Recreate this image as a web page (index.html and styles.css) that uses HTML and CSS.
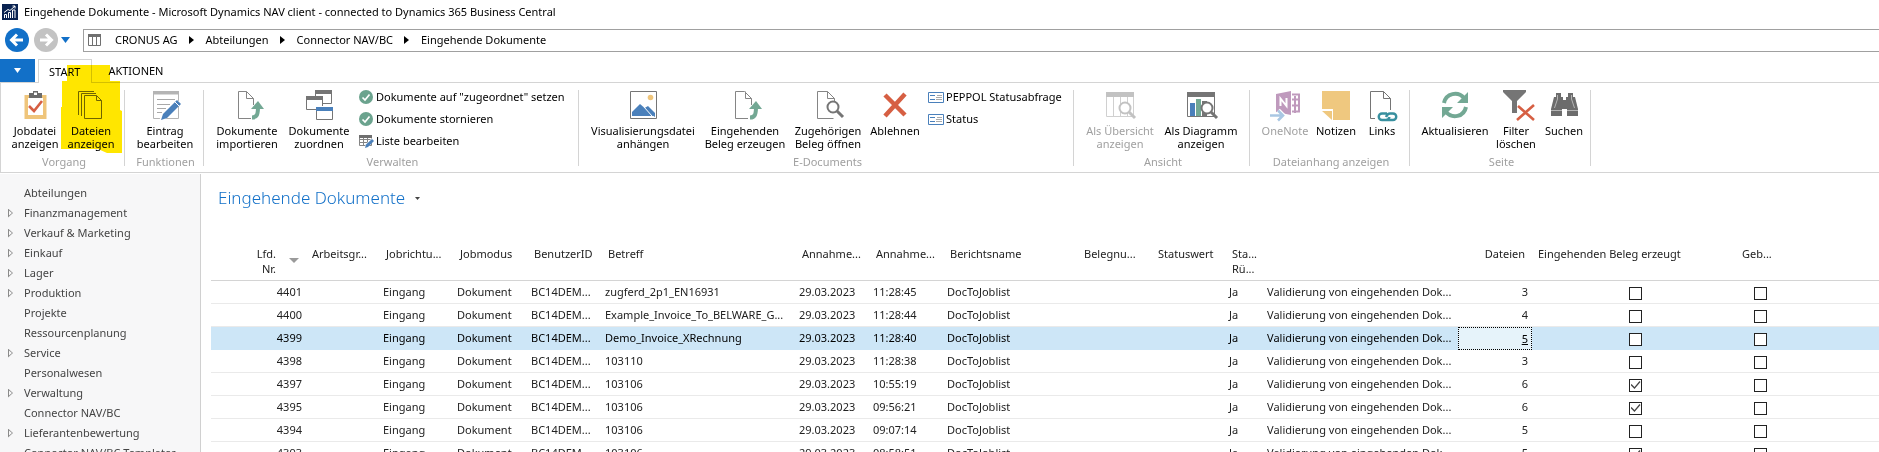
FILE: index.html
```
<!DOCTYPE html>
<html lang="de">
<head>
<meta charset="utf-8">
<title>Eingehende Dokumente - Microsoft Dynamics NAV client</title>
<link rel="stylesheet" href="styles.css">
</head>
<body>
<div class="app">
<header class="titlebar">
  <svg class="app-logo" viewBox="0 0 16 16"><rect width="16" height="16" fill="#0a2351"/><path d="M2.500 14v-3.500h2V14M6.500 14V8.500h2V14M10.500 14V6h2.500v8M2 8.500l4-3 2 1L13 2M10.500 2H13v2.500" fill="none" stroke="#fff"/></svg>
  <span>Eingehende Dokumente - Microsoft Dynamics NAV client - connected to Dynamics 365 Business Central</span>
</header>
<div class="navbar">
  <button class="round back" aria-label="Zurück"><svg viewBox="0 0 24 24"><path d="M18 12H7M12 6.500L6.500 12l5.500 5.500"/></svg></button>
  <button class="round forward" aria-label="Vorwärts"><svg viewBox="0 0 24 24"><path d="M6 12h11M12 6.500l5.500 5.500-5.500 5.500"/></svg></button>
  <button class="history" aria-label="Verlauf"><svg viewBox="0 0 9 6"><path d="M0 0h9L4.500 6z" fill="#1270c8"/></svg></button>
  <nav class="address">
    <svg class="page-icon" viewBox="0 0 13 12"><path d="M.5.500h12v11H.5zM4.500 3v8.500M8.500 3v8.500" fill="none" stroke="#707070"/><path d="M0 0h13v3H0z" fill="#707070"/></svg>
    <a href="#">CRONUS AG</a><i class="crumb"></i><a href="#">Abteilungen</a><i class="crumb"></i><a href="#">Connector NAV/BC</a><i class="crumb"></i><a href="#">Eingehende Dokumente</a>
  </nav>
</div>
<div class="tabs">
  <button class="file-tab" aria-label="Datei"><svg viewBox="0 0 7 5"><path d="M0 0h7L3.500 5z" fill="#fff"/></svg></button>
  <button class="tab active">START</button>
  <button class="tab">AKTIONEN</button>
</div>
<div class="ribbon">
  <section class="group g-vorgang">
    <div class="tools">
      <button class="tool w56"><svg viewBox="0 0 30 30"><path d="M4.500 5h22v24h-22z" fill="#efc57b"/><path d="M8 8h15v17H8z" fill="#fff"/><path d="M9 3h4V1h5v2h4v5H9z" fill="#6b6b6b"/><path d="M14 2.500h3V5h-3z" fill="#fff"/><path d="M9 16l5 5 8-10" fill="none" stroke="#d65f43" stroke-width="2.600"/></svg><span>Jobdatei<br>anzeigen</span></button>
      <button class="tool w56"><svg viewBox="0 0 30 30" fill="none" stroke="#6f6f6f"><path d="M2.500 25V1.500H18M5.500 26V3.500H20M8.500 5.500h12l5 5v18h-17zM20.500 5.500v5h5"/></svg><span>Dateien<br>anzeigen</span></button>
    </div>
    <h2>Vorgang</h2>
  </section>
  <section class="group g-funktionen">
    <div class="tools">
      <button class="tool w64"><svg viewBox="0 0 30 30"><path d="M3.500 1.500h25v27h-25z" fill="none" stroke="#b4b4b4"/><path d="M3 1h26v3.500H3z" fill="#b4b4b4"/><path d="M7 9.500h18M7 14.500h13M7 18.500h9M7 22.500h5" stroke="#a8a8a8"/><path d="M9 31l3-8L26 9l5 4-14 15z" fill="#fff"/><path d="M11 30l2-6L27 10l4 4-14 14z" fill="#4a80bb"/><path d="M25 12l4 4" stroke="#fff"/></svg><span>Eintrag<br>bearbeiten</span></button>
    </div>
    <h2>Funktionen</h2>
  </section>
  <section class="group g-verwalten">
    <div class="tools">
      <button class="tool w72"><svg viewBox="0 0 30 30"><path d="M21.500 15V8.500l-7-7h-8v27H19M14.500 1.500v7h7" fill="none" stroke="#858585"/><path d="M20 27.500c5 0 6-3 6-11" fill="none" stroke="#73a894" stroke-width="4"/><path d="M19 19l7-8 6 8z" fill="#73a894"/></svg><span>Dokumente<br>importieren</span></button>
      <button class="tool w72"><svg viewBox="0 0 30 30"><path d="M11.500 6V1.500h16v12H19M2.500 7.500h16v12h-16z" fill="none" stroke="#757575"/><path d="M11 0h17v4H11zM2 6h17v4H2z" fill="#757575"/><path d="M12 16h17v15H12z" fill="#fff"/><path d="M12.500 17.500h16v12h-16z" fill="#fff" stroke="#757575"/><path d="M12 17h17v4H12z" fill="#4a80bb"/></svg><span>Dokumente<br>zuordnen</span></button>
      <div class="list">
        <button class="item"><svg viewBox="0 0 16 16"><circle cx="8" cy="8" r="7" fill="#6ba38e"/><path d="M4.500 8.500L7 11l4.500-5.500" fill="none" stroke="#fff" stroke-width="1.700"/></svg>Dokumente auf "zugeordnet" setzen</button>
        <button class="item"><svg viewBox="0 0 16 16"><circle cx="8" cy="8" r="7" fill="#6ba38e"/><path d="M4.500 8.500L7 11l4.500-5.500" fill="none" stroke="#fff" stroke-width="1.700"/></svg>Dokumente stornieren</button>
        <button class="item"><svg viewBox="0 0 16 16"><path d="M1.500 2.500h12v10h-12zM1 6.500h13M1 9.500h13M5.500 3v10M9.500 3v10" fill="none" stroke="#858585"/><path d="M1 2h13v3H1z" fill="#6f6f6f"/><path d="M6 16l2-5 6-6 2 2-6 7z" fill="#fff"/><path d="M7 15l1-3.500L14 6l2 2-6 6z" fill="#4a80bb"/></svg>Liste bearbeiten</button>
      </div>
    </div>
    <h2>Verwalten</h2>
  </section>
  <section class="group g-edocs">
    <div class="tools">
      <button class="tool w112"><svg viewBox="0 0 30 30"><path d="M2.500 1.500h26v27h-26z" fill="#fff" stroke="#757575"/><circle cx="22.500" cy="7.500" r="2.800" fill="#efc57b"/><path d="M4 26v-4l8-8 14 12z" fill="#4a80bb"/><path d="M15 19l5-3 7 7v4z" fill="#4a80bb"/><path d="M16 17l8 9" stroke="#fff"/></svg><span>Visualisierungsdatei<br>anhängen</span></button>
      <button class="tool w92"><svg viewBox="0 0 30 30"><path d="M21.500 15V8.500l-7-7h-9v27H18M15.500 1.500v7h6" fill="none" stroke="#858585"/><path d="M20 27.500c5 0 6-3 6-11" fill="none" stroke="#73a894" stroke-width="4"/><path d="M19 19l7-8 6 8z" fill="#73a894"/></svg><span>Eingehenden<br>Beleg erzeugen</span></button>
      <button class="tool w74"><svg viewBox="0 0 30 30"><path d="M21.500 11V8.500l-7-7h-10v27h16M14.500 1.500v7h7" fill="none" stroke="#858585"/><circle cx="20" cy="17" r="5.500" fill="#fff" stroke="#757575" stroke-width="2"/><path d="M24 21l6 6" stroke="#757575" stroke-width="3"/></svg><span>Zugehörigen<br>Beleg öffnen</span></button>
      <button class="tool w60"><svg viewBox="0 0 30 30"><path d="M5 5l20 20M25 4L5 26" stroke="#d65f43" stroke-width="4.500"/></svg><span>Ablehnen</span></button>
      <div class="list">
        <button class="item"><svg viewBox="0 0 16 16"><path d="M.5 3.500h15v10H.5z" fill="#fff" stroke="#4a80bb"/><path d="M2 6.500h5M2 10.500h5" stroke="#4a80bb"/><path d="M8 8.500h6M9 6.500h5M8 10.500h6" stroke="#aaa"/></svg>PEPPOL Statusabfrage</button>
        <button class="item"><svg viewBox="0 0 16 16"><path d="M.5 3.500h15v10H.5z" fill="#fff" stroke="#4a80bb"/><path d="M2 6.500h5M2 10.500h5" stroke="#4a80bb"/><path d="M8 8.500h6M9 6.500h5M8 10.500h6" stroke="#aaa"/></svg>Status</button>
      </div>
    </div>
    <h2>E-Documents</h2>
  </section>
  <section class="group g-ansicht">
    <div class="tools">
      <button class="tool w78" disabled><svg viewBox="0 0 30 30"><path d="M1.500 2.500h27v24h-27zM8.500 6v20M15.500 6v20M22.500 6v20" fill="none" stroke="#d0d0d0"/><path d="M1 2h28v5H1z" fill="#c2c2c2"/><circle cx="20" cy="18" r="5.500" fill="#fff" stroke="#c2c2c2" stroke-width="2"/><path d="M24 22l6 6" stroke="#c2c2c2" stroke-width="3"/></svg><span>Als Übersicht<br>anzeigen</span></button>
      <button class="tool w84"><svg viewBox="0 0 30 30"><path d="M1.500 2.500h27v24h-27z" fill="#fff" stroke="#757575"/><path d="M1 2h28v5H1z" fill="#757575"/><path d="M4 13h5v13H4z" fill="#4a80bb"/><path d="M10 9h5v17h-5z" fill="#73a894"/><path d="M16 11h5v15h-5z" fill="#757575"/><circle cx="21" cy="18" r="5.500" fill="#fff" stroke="#757575" stroke-width="2"/><path d="M25 22l6 6" stroke="#757575" stroke-width="3"/></svg><span>Als Diagramm<br>anzeigen</span></button>
    </div>
    <h2>Ansicht</h2>
  </section>
  <section class="group g-anhang">
    <div class="tools">
      <button class="tool w54" disabled><svg viewBox="0 0 30 30"><path d="M6 4l15-3v24L6 22z" fill="#bf9abd"/><path d="M10.500 16V8.500l6 7.500V8" fill="none" stroke="#fff" stroke-width="2"/><path d="M22 4.500h7v17h-7M22 9.500h7M22 15.500h7M25 6v17" fill="none" stroke="#bf9abd" stroke-width="2"/><path d="M0 25.500h12M8 20.500l5 5-5 5" fill="none" stroke="#fff" stroke-width="5"/><path d="M0 25.500h12M8 20.500l5 5-5 5" fill="none" stroke="#a9c7e3" stroke-width="2.600"/></svg><span>OneNote</span></button>
      <button class="tool w48"><svg viewBox="0 0 30 30"><path d="M1 1h28v29H12V19H1z" fill="#efc87f"/><path d="M1 21h10v9z" fill="#efc87f"/></svg><span>Notizen</span></button>
      <button class="tool w44"><svg viewBox="0 0 30 30"><path d="M23.500 20V8.500l-7-7h-13v27H8M16.500 1.500v7h7" fill="none" stroke="#757575"/><path d="M10 21h20v10H10z" fill="#fff"/><path d="M20 23.500h-5a3 3 0 0 0 0 6.500h4c2 0 3-1 3.500-3M19.500 30H26a3 3 0 0 0 0-6.500h-3c-2 0-3 1-4 3.500" fill="none" stroke="#38909f" stroke-width="2.400"/></svg><span>Links</span></button>
    </div>
    <h2>Dateianhang anzeigen</h2>
  </section>
  <section class="group g-seite">
    <div class="tools">
      <button class="tool w72"><svg viewBox="0 0 30 30"><path d="M4 13C6 3 18 1 24 8M26 17C24 27 12 29 6 22" fill="none" stroke="#73a894" stroke-width="4"/><path d="M28 2v11H17zM2 28V17h11z" fill="#73a894"/></svg><span>Aktualisieren</span></button>
      <button class="tool w50"><svg viewBox="0 0 30 30"><path d="M2 0h23v2l-9 9v12h-5V11L2 2z" fill="#757575"/><path d="M17 16l16 14M33 15L16 30" stroke="#d65f43" stroke-width="2.600"/></svg><span>Filter<br>löschen</span></button>
      <button class="tool w46"><svg viewBox="0 0 30 30"><path d="M7 3h5v4h2v3h3V7h2V3h5v4h2l3 12v7H18v-7h-5v7H2v-7L5 7h2z" fill="#6c6c6c"/><path d="M8.500 5v4l-3 9M22.500 5v4l3 9M2 20.500h11M18 20.500h11" fill="none" stroke="#b5b5b5"/></svg><span>Suchen</span></button>
    </div>
    <h2>Seite</h2>
  </section>
</div>
<div class="workspace">
  <aside class="sidebar">
    <ul>
      <li><a href="#">Abteilungen</a></li>
      <li class="node"><a href="#">Finanzmanagement</a></li>
      <li class="node"><a href="#">Verkauf &amp; Marketing</a></li>
      <li class="node"><a href="#">Einkauf</a></li>
      <li class="node"><a href="#">Lager</a></li>
      <li class="node"><a href="#">Produktion</a></li>
      <li><a href="#">Projekte</a></li>
      <li><a href="#">Ressourcenplanung</a></li>
      <li class="node"><a href="#">Service</a></li>
      <li><a href="#">Personalwesen</a></li>
      <li class="node"><a href="#">Verwaltung</a></li>
      <li><a href="#">Connector NAV/BC</a></li>
      <li class="node"><a href="#">Lieferantenbewertung</a></li>
      <li><a href="#">Connector NAV/BC Templates</a></li>
    </ul>
  </aside>
  <main class="content">
    <h1>Eingehende Dokumente <svg viewBox="0 0 5 3"><path d="M0 0h5L2.500 3z" fill="#444"/></svg></h1>
    <table>
      <colgroup><col class="c-no"><col class="c-std"><col class="c-std"><col class="c-std"><col class="c-std"><col class="c-wide"><col class="c-std"><col class="c-std"><col class="c-report"><col class="c-std"><col class="c-std"><col class="c-flag"><col class="c-wide"><col class="c-std"><col class="c-check"><col class="c-geb"><col></colgroup>
      <thead><tr><th class="no">Lfd.<br>Nr.<i class="sort"></i></th><th>Arbeitsgr...</th><th>Jobrichtu...</th><th>Jobmodus</th><th>BenutzerID</th><th>Betreff</th><th>Annahme...</th><th>Annahme...</th><th>Berichtsname</th><th>Belegnu...</th><th>Statuswert</th><th>Sta...<br>Rü...</th><th></th><th class="num">Dateien</th><th>Eingehenden Beleg erzeugt</th><th>Geb...</th><th></th></tr></thead>
      <tbody>
        <tr><td class="num">4401</td><td></td><td>Eingang</td><td>Dokument</td><td>BC14DEM...</td><td>zugferd_2p1_EN16931</td><td>29.03.2023</td><td>11:28:45</td><td>DocToJoblist</td><td></td><td></td><td>Ja</td><td>Validierung von eingehenden Dok...</td><td class="num">3</td><td class="chk"><input type="checkbox" aria-label="Beleg erzeugt"></td><td class="chk"><input type="checkbox" aria-label="Geb."></td><td></td></tr>
        <tr><td class="num">4400</td><td></td><td>Eingang</td><td>Dokument</td><td>BC14DEM...</td><td>Example_Invoice_To_BELWARE_G...</td><td>29.03.2023</td><td>11:28:44</td><td>DocToJoblist</td><td></td><td></td><td>Ja</td><td>Validierung von eingehenden Dok...</td><td class="num">4</td><td class="chk"><input type="checkbox" aria-label="Beleg erzeugt"></td><td class="chk"><input type="checkbox" aria-label="Geb."></td><td></td></tr>
        <tr class="selected"><td class="num">4399</td><td></td><td>Eingang</td><td>Dokument</td><td>BC14DEM...</td><td>Demo_Invoice_XRechnung</td><td>29.03.2023</td><td>11:28:40</td><td>DocToJoblist</td><td></td><td></td><td>Ja</td><td>Validierung von eingehenden Dok...</td><td class="num focus"><a href="#">5</a></td><td class="chk"><input type="checkbox" aria-label="Beleg erzeugt"></td><td class="chk"><input type="checkbox" aria-label="Geb."></td><td></td></tr>
        <tr><td class="num">4398</td><td></td><td>Eingang</td><td>Dokument</td><td>BC14DEM...</td><td>103110</td><td>29.03.2023</td><td>11:28:38</td><td>DocToJoblist</td><td></td><td></td><td>Ja</td><td>Validierung von eingehenden Dok...</td><td class="num">3</td><td class="chk"><input type="checkbox" aria-label="Beleg erzeugt"></td><td class="chk"><input type="checkbox" aria-label="Geb."></td><td></td></tr>
        <tr><td class="num">4397</td><td></td><td>Eingang</td><td>Dokument</td><td>BC14DEM...</td><td>103106</td><td>29.03.2023</td><td>10:55:19</td><td>DocToJoblist</td><td></td><td></td><td>Ja</td><td>Validierung von eingehenden Dok...</td><td class="num">6</td><td class="chk"><input type="checkbox" checked aria-label="Beleg erzeugt"></td><td class="chk"><input type="checkbox" aria-label="Geb."></td><td></td></tr>
        <tr><td class="num">4395</td><td></td><td>Eingang</td><td>Dokument</td><td>BC14DEM...</td><td>103106</td><td>29.03.2023</td><td>09:56:21</td><td>DocToJoblist</td><td></td><td></td><td>Ja</td><td>Validierung von eingehenden Dok...</td><td class="num">6</td><td class="chk"><input type="checkbox" checked aria-label="Beleg erzeugt"></td><td class="chk"><input type="checkbox" aria-label="Geb."></td><td></td></tr>
        <tr><td class="num">4394</td><td></td><td>Eingang</td><td>Dokument</td><td>BC14DEM...</td><td>103106</td><td>29.03.2023</td><td>09:07:14</td><td>DocToJoblist</td><td></td><td></td><td>Ja</td><td>Validierung von eingehenden Dok...</td><td class="num">5</td><td class="chk"><input type="checkbox" aria-label="Beleg erzeugt"></td><td class="chk"><input type="checkbox" aria-label="Geb."></td><td></td></tr>
        <tr><td class="num">4393</td><td></td><td>Eingang</td><td>Dokument</td><td>BC14DEM...</td><td>103106</td><td>29.03.2023</td><td>08:58:51</td><td>DocToJoblist</td><td></td><td></td><td>Ja</td><td>Validierung von eingehenden Dok...</td><td class="num">5</td><td class="chk"><input type="checkbox" checked aria-label="Beleg erzeugt"></td><td class="chk"><input type="checkbox" aria-label="Geb."></td><td></td></tr>
      </tbody>
    </table>
  </main>
</div>
<svg class="marker" viewBox="0 0 62 89"><path d="M6 0h43v16h10v29l2 1v42H46l-9-4H0V42h1V16h5z" fill="#ffe600"/></svg>
</div>
</body>
</html>
```
FILE: styles.css
```
* { box-sizing: border-box; }
body { margin: 0; background: #fff; color: #000; font: 11px/16px "Noto Sans", "Open Sans", sans-serif; }
button { border: 0; padding: 0; background: none; color: inherit; font: inherit; white-space: nowrap; }
a { color: inherit; text-decoration: none; }
svg { display: block; flex: none; overflow: visible; }
h1, h2, ul { margin: 0; padding: 0; font-weight: 400; }
.app { position: relative; display: flex; flex-direction: column; height: 100vh; overflow: hidden; }

.titlebar { display: flex; align-items: center; gap: 6px; height: 24px; padding-left: 2px; white-space: nowrap; }
.app-logo { width: 16px; height: 16px; }

.navbar { display: flex; align-items: center; height: 32px; padding-left: 5px; }
.round { display: flex; width: 24px; height: 24px; border-radius: 50%; }
.round svg { width: 24px; height: 24px; fill: none; stroke: #fff; stroke-width: 3; }
.back { background: #1270c8; }
.forward { margin-left: 5px; background: #c3c3c3; }
.history { margin: 0 13px 0 3px; }
.history svg { width: 9px; height: 6px; }
.address { flex: 1; display: flex; align-items: center; height: 23px; padding-left: 4px; border: 1px solid #a0a0a0; border-right: 0; }
.page-icon { width: 13px; height: 12px; margin-right: 14px; }
.crumb { margin: 0 12px 0 11px; border: 4px solid transparent; border-left: 5px solid #000; border-right: 0; }

.tabs { display: flex; align-items: flex-end; height: 26px; }
.file-tab { display: grid; place-content: center; width: 35px; height: 23px; margin-right: 3px; background: #1270c8; }
.file-tab svg { width: 7px; height: 5px; }
.tab { height: 23px; padding: 0 11px 0 10px; border: 1px solid transparent; border-bottom: 0; }
.tab.active { border-color: #d4d4d4; z-index: 1; margin-bottom: -1px; height: 24px; background: #fff; }
.tab + .tab { padding: 0 15px; }

.ribbon { display: flex; height: 91px; flex: none; border: 1px solid #d4d4d4; border-right: 0; }
.group { position: relative; display: flex; flex-direction: column; justify-content: space-between; padding-top: 7px; padding-bottom: 2px; }
.group::after { content: ""; position: absolute; top: 7px; right: 0; bottom: 6px; width: 1px; background: #d4d4d4; }
.group h2 { padding-left: 2px; color: #a0a0a0; font-size: 11px; line-height: 16px; text-align: center; }
.tools { display: flex; align-items: flex-start; }
.tool { display: flex; flex-direction: column; align-items: center; gap: 4px; line-height: 13px; }
.tool svg { width: 30px; height: 30px; }
.tool:disabled { color: #a0a0a0; }
.w44 { width: 44px; } .w46 { width: 46px; } .w48 { width: 48px; } .w50 { width: 50px; }
.w54 { width: 54px; } .w56 { width: 56px; } .w60 { width: 60px; } .w64 { width: 64px; }
.w72 { width: 72px; } .w74 { width: 74px; } .w78 { width: 78px; } .w84 { width: 84px; }
.w92 { width: 92px; } .w112 { width: 112px; }
.list { display: flex; flex-direction: column; gap: 6px; margin-top: -1px; }
.item { display: flex; align-items: center; gap: 2px; height: 16px; }
.item svg { width: 16px; height: 16px; }
.g-vorgang { width: 124px; } .g-vorgang .tools { padding-left: 6px; }
.g-funktionen { width: 79px; } .g-funktionen .tools { padding-left: 8px; }
.g-verwalten { width: 375px; } .g-verwalten .tools { padding-left: 7px; } .g-verwalten .list { padding-left: 3px; }
.g-edocs { width: 495px; } .g-edocs .tools { padding-left: 8px; } .g-edocs .list { padding-left: 3px; }
.g-ansicht { width: 176px; } .g-ansicht .tools { padding-left: 7px; }
.g-anhang { width: 160px; } .g-anhang .tools { padding-left: 8px; }
.g-seite { width: 181px; } .g-seite .tools { padding-left: 9px; }

.workspace { flex: 1; display: flex; min-height: 0; padding-top: 1px; }
.sidebar { width: 201px; flex: none; overflow: hidden; padding-top: 9px; border-right: 1px solid #d0d0d0; background: #f7f7f8; color: #444; }
.sidebar ul { list-style: none; }
.sidebar li { display: flex; align-items: center; height: 20px; padding-left: 24px; white-space: nowrap; }
.sidebar .node { padding-left: 8px; }
.sidebar .node::before { content: ""; width: 5px; height: 9px; margin-right: 11px; background: #8a8a8a; clip-path: polygon(0 0, 100% 50%, 0 100%, 0 0, 1px 2px, 1px 7px, 4px 50%, 1px 2px); }
.content { flex: 1; min-width: 0; overflow: hidden; padding: 10px 0 0 10px; }
h1 { display: flex; align-items: center; gap: 10px; padding-left: 7px; color: #1270c8; font-size: 17px; line-height: 28px; font-weight: 300; }
h1 svg { width: 5px; height: 3px; }

table { width: 100%; margin-top: 34px; border-collapse: separate; border-spacing: 0; table-layout: fixed; color: #222; }
.c-no { width: 95px; } .c-std { width: 74px; } .c-wide { width: 194px; } .c-report { width: 134px; }
.c-flag { width: 38px; } .c-check { width: 204px; } .c-geb { width: 45px; }
th { height: 35px; padding: 0 0 0 6px; border-bottom: 1px solid #d4d4d4; font-weight: 400; line-height: 15px; text-align: left; vertical-align: top; white-space: nowrap; }
td { height: 23px; padding: 0 0 0 3px; border-bottom: 1px solid #eaeaea; white-space: nowrap; }
th.no { position: relative; padding-right: 30px; text-align: right; }
.sort { position: absolute; top: 12px; right: 7px; border: 5px solid transparent; border-top-color: #9a9a9a; border-bottom: 0; }
th.num { padding-right: 7px; text-align: right; }
td.num { padding-right: 4px; text-align: right; }
.chk { text-align: center; }
.selected td { border-color: #cde6f7; background: #cde6f7; color: #000; }
.selected td.focus { border: 1px dotted #000; padding-right: 3px; background: #e6f3fa; }
.focus a { text-decoration: underline; }
input { appearance: none; display: inline-grid; place-content: center; width: 13px; height: 13px; margin: 0; border: 1px solid #222; background: #fff; vertical-align: middle; }
input:checked::after { content: ""; width: 10px; height: 8px; background: #444; clip-path: polygon(0 50%, 1px 3px, 4px 6px, 9px 0, 10px 1px, 4px 8px); }

.marker { position: absolute; top: 65px; left: 61px; width: 62px; height: 89px; z-index: 2; mix-blend-mode: multiply; pointer-events: none; }
```
